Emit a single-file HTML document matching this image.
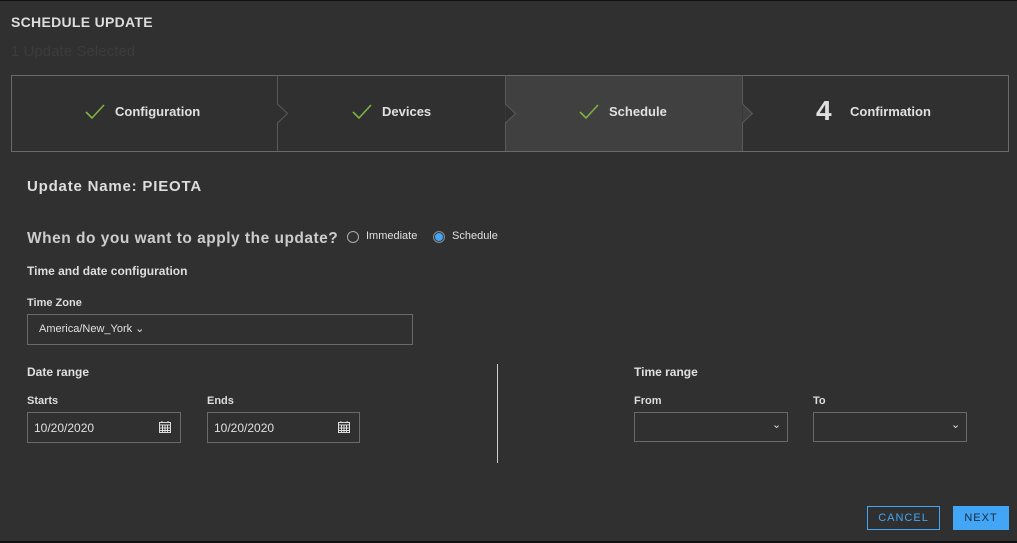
<!DOCTYPE html>
<html><head><meta charset="utf-8"><style>
*{margin:0;padding:0;box-sizing:border-box}
body{width:1017px;height:543px;background:#303030;font-family:"Liberation Sans",sans-serif;color:#e0e0e0;position:relative;overflow:hidden}
.a{position:absolute;white-space:nowrap}
.b{font-weight:bold}
.box{position:absolute;border:1px solid #6a6a6a}
.lbl{font-size:11px;font-weight:bold;color:#ddd}
</style></head><body>
<div class="a" style="left:0;top:0;width:1017px;height:1px;background:#111"></div>
<div class="a" style="left:0;top:541px;width:1017px;height:2px;background:#111"></div>
<div class="a b" style="left:11px;top:14px;font-size:14px;color:#ddd;letter-spacing:0.3px">SCHEDULE UPDATE</div>
<div class="a" style="left:11px;top:44px;font-size:14.5px;color:#3c3c3c;letter-spacing:0.3px">1 Update Selected</div>

<div class="a" style="left:505px;top:75px;width:237px;height:77px;background:#404040"></div>
<div class="box" style="left:11px;top:75px;width:998px;height:77px"></div>
<svg class="a" style="left:0;top:0" width="1017" height="160">
<g stroke="#5a5a5a" fill="#303030" stroke-width="1">
<path d="M277.5 75 V104 L287.5 113.5 L277.5 123 V151"/>
<path d="M505.5 75 V104 L515.5 113.5 L505.5 123 V151" fill="#303030"/>
<path d="M742.5 75 V104 L752.5 113.5 L742.5 123 V151" fill="#404040"/>
</g>
<g stroke="#7cb342" stroke-width="1.6" fill="none">
<path d="M86 112 L92 118 L104 105"/>
<path d="M353 112 L359 118 L371 105"/>
<path d="M580 112 L586 118 L598 105"/>
</g>
</svg>
<div class="a b" style="left:115px;top:104px;font-size:13px">Configuration</div>
<div class="a b" style="left:382px;top:104px;font-size:13px">Devices</div>
<div class="a b" style="left:609px;top:104px;font-size:13px">Schedule</div>
<div class="a b" style="left:816px;top:95px;font-size:28px">4</div>
<div class="a b" style="left:850px;top:104px;font-size:13px">Confirmation</div>

<div class="a b" style="left:27px;top:178px;font-size:15px;color:#ddd;letter-spacing:0.8px">Update Name: PIEOTA</div>
<div class="a b" style="left:27px;top:230px;font-size:15.5px;color:#ccc;letter-spacing:0.5px">When do you want to apply the update?</div>
<div class="a" style="left:347px;top:231px;width:12px;height:12px;border:1px solid #aaa;border-radius:50%"></div>
<div class="a" style="left:366px;top:230px;font-size:11px">Immediate</div>
<div class="a" style="left:433px;top:231px;width:12px;height:12px;border:1px solid #888;border-radius:50%;background:#42a5f5;box-shadow:inset 0 0 0 1px #303030"></div>
<div class="a" style="left:452px;top:230px;font-size:11px">Schedule</div>
<div class="a b" style="left:27px;top:264px;font-size:12px;color:#ddd">Time and date configuration</div>
<div class="a lbl" style="left:27px;top:297px">Time Zone</div>
<div class="box" style="left:27px;top:314px;width:386px;height:31px"></div>
<div class="a" style="left:39px;top:322px;font-size:11px">America/New_York ⌄</div>

<div class="a b" style="left:27px;top:365px;font-size:12px">Date range</div>
<div class="a lbl" style="left:27px;top:395px">Starts</div>
<div class="box" style="left:27px;top:412px;width:154px;height:31px"></div>
<div class="a" style="left:34px;top:421px;font-size:12px">10/20/2020</div>
<div class="a lbl" style="left:207px;top:395px">Ends</div>
<div class="box" style="left:207px;top:412px;width:153px;height:31px"></div>
<div class="a" style="left:214px;top:421px;font-size:12px">10/20/2020</div>
<svg class="a" style="left:158px;top:420px" width="14" height="14"><g stroke="#ddd" fill="none" stroke-width="1"><rect x="1.5" y="2.5" width="11" height="10"/><path d="M1.5 5H12.5M1.5 8H12.5M1.5 10.5H12.5M4.5 5V12.5M7 5V12.5M9.5 5V12.5M4 1V3M10 1V3"/></g></svg>
<svg class="a" style="left:337px;top:420px" width="14" height="14"><g stroke="#ddd" fill="none" stroke-width="1"><rect x="1.5" y="2.5" width="11" height="10"/><path d="M1.5 5H12.5M1.5 8H12.5M1.5 10.5H12.5M4.5 5V12.5M7 5V12.5M9.5 5V12.5M4 1V3M10 1V3"/></g></svg>
<div class="a" style="left:497px;top:364px;width:1px;height:99px;background:#ccc"></div>

<div class="a b" style="left:634px;top:365px;font-size:12px">Time range</div>
<div class="a lbl" style="left:634px;top:395px">From</div>
<div class="box" style="left:634px;top:412px;width:154px;height:30px"></div>
<div class="a" style="left:772px;top:418px;font-size:11px">⌄</div>
<div class="a lbl" style="left:813px;top:395px">To</div>
<div class="box" style="left:813px;top:412px;width:154px;height:30px"></div>
<div class="a" style="left:951px;top:418px;font-size:11px">⌄</div>

<div class="a" style="left:867px;top:506px;width:73px;height:24px;border:1px solid #42a5f5;color:#42a5f5;font-size:11px;text-align:center;line-height:22px;letter-spacing:1px">CANCEL</div>
<div class="a" style="left:953px;top:506px;width:56px;height:24px;background:#42a5f5;color:#1a2a3a;font-size:11px;text-align:center;line-height:24px;letter-spacing:1px">NEXT</div>
</body></html>
